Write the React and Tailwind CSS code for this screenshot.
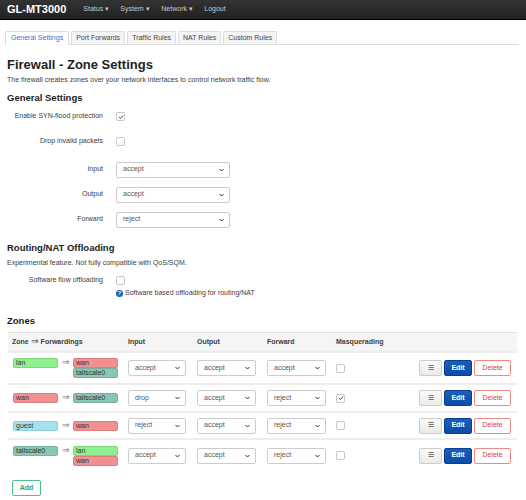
import React from "react";

const F = "font-['Liberation_Sans',Arial,sans-serif]";

function Check({ checked }) {
  return (
    <div className="w-[9px] h-[9px] border border-[#c8c8c8] rounded-[2px] bg-white flex items-center justify-center">
      {checked && (
        <svg width="6" height="6" viewBox="0 0 10 10">
          <path d="M1.5 5.2 L4 7.6 L8.6 2.4" fill="none" stroke="#333" strokeWidth="1.5" />
        </svg>
      )}
    </div>
  );
}

function Select({ value, w }) {
  return (
    <div className={`${w} h-[16px] border border-[#ccc] rounded-[2px] bg-white flex items-center justify-between pl-[6px] pr-[5px] text-[7px] text-[#555]`}>
      <span>{value}</span>
      <svg width="5" height="4" viewBox="0 0 10 8">
        <path d="M1 2 L5 6 L9 2" fill="none" stroke="#333" strokeWidth="2" />
      </svg>
    </div>
  );
}

const zoneColors = {
  lan: "bg-[#90f090] border-[#7fd67f]",
  wan: "bg-[#f09090] border-[#dc7f7f]",
  guest: "bg-[#a4e2ef] border-[#90cfdc]",
  tailscale0: "bg-[#8ac6b4] border-[#78b3a1]",
};

function Badge({ z }) {
  return (
    <div className={`w-[45px] h-[10px] border rounded-[2px] ${zoneColors[z]} text-[7px] leading-[8px] text-[#333] pl-[2px]`}>
      {z}
    </div>
  );
}

function FormRow({ label, h, children, extra = "" }) {
  return (
    <div className={`flex items-center ${h} ${extra}`}>
      <div className="w-[103px] text-right text-[7px] text-[#404040]">{label}</div>
      <div className="ml-[13px]">{children}</div>
    </div>
  );
}

function ZoneRow({ zone, fwd, input, output, forward, masq, h }) {
  return (
    <div className={`flex items-center ${h} border-t-2 border-[#eee]`}>
      <div className="w-[117px] pl-[5px] flex items-start">
        <Badge z={zone} />
        <span className="text-[9px] text-[#777] ml-[4px] mr-[3px] leading-[9px]">⇒</span>
        <div className="flex flex-col">
          {fwd.map((f) => (
            <Badge key={f} z={f} />
          ))}
        </div>
      </div>
      <div className="w-[72px] pl-[3px]">
        <Select value={input} w="w-[58px]" />
      </div>
      <div className="w-[70px]">
        <Select value={output} w="w-[59px]" />
      </div>
      <div className="w-[69px]">
        <Select value={forward} w="w-[59px]" />
      </div>
      <div className="w-[40px]">
        <Check checked={masq} />
      </div>
      <div className="flex-1 flex justify-end pr-[6px] gap-[2px]">
        <div className="w-[23px] h-[16px] border border-[#ccc] rounded-[2px] bg-gradient-to-b from-[#fafafa] to-[#eaeaea] flex items-center justify-center text-[7px] text-[#555]">☰</div>
        <div className="w-[28px] h-[16px] border border-[#0a3f8a] rounded-[2px] bg-gradient-to-b from-[#1a5fc0] to-[#0a4ca6] flex items-center justify-center text-[7px] font-bold text-white">Edit</div>
        <div className="w-[37px] h-[16px] border border-[#f08a80] rounded-[2px] bg-white flex items-center justify-center text-[7px] text-[#e0403a]">Delete</div>
      </div>
    </div>
  );
}

export default function App() {
  return (
    <div className={`${F} w-[526px] h-[500px] overflow-hidden bg-white text-[#333]`}>
      {/* navbar */}
      <div className="h-[20px] bg-gradient-to-b from-[#333] to-[#222] border-b border-black flex items-center">
        <span className="ml-[7px] text-[11px] font-bold text-white">GL-MT3000</span>
        <div className="ml-[17px] flex items-center text-[7px] text-[#c8c8c8]">
          <span className="w-[37px]">Status ▾</span>
          <span className="w-[41px]">System ▾</span>
          <span className="w-[43px]">Network ▾</span>
          <span>Logout</span>
        </div>
      </div>

      {/* tabs */}
      <div className="mt-[11px] ml-[5px] mr-[7px] flex items-end h-[14px] border-b border-[#ddd] text-[7px]">
        <div className="h-[14px] px-[5px] flex items-center border border-b-0 border-[#ddd] rounded-t-[2px] bg-white text-[#2a7ad2] -mb-px">General Settings</div>
        <div className="ml-[2px] h-[13px] px-[4px] flex items-center border border-b-0 border-[#ddd] rounded-t-[2px] bg-[#f4f4f4] text-[#444]">Port Forwards</div>
        <div className="ml-[2px] h-[13px] px-[4px] flex items-center border border-b-0 border-[#ddd] rounded-t-[2px] bg-[#f4f4f4] text-[#444]">Traffic Rules</div>
        <div className="ml-[2px] h-[13px] px-[4px] flex items-center border border-b-0 border-[#ddd] rounded-t-[2px] bg-[#f4f4f4] text-[#444]">NAT Rules</div>
        <div className="ml-[2px] h-[13px] px-[4px] flex items-center border border-b-0 border-[#ddd] rounded-t-[2px] bg-[#f4f4f4] text-[#444]">Custom Rules</div>
      </div>

      <div className="px-[7px]">
        <h1 className="mt-[12px] text-[13px] leading-[15px] font-bold text-[#222]">Firewall - Zone Settings</h1>
        <p className="mt-[3px] text-[7px] leading-[10px] text-[#404040]">
          The firewall creates zones over your network interfaces to control network traffic flow.
        </p>
        <h2 className="mt-[7px] text-[9.5px] leading-[12px] font-bold text-[#222]">General Settings</h2>
      </div>

      <FormRow label="Enable SYN-flood protection" h="h-[25px]"><Check checked /></FormRow>
      <FormRow label="Drop invalid packets" h="h-[25px]"><Check /></FormRow>
      <FormRow label="Input" h="h-[25px]" extra="mt-[3px]"><Select value="accept" w="w-[114px]" /></FormRow>
      <FormRow label="Output" h="h-[25px]"><Select value="accept" w="w-[114px]" /></FormRow>
      <FormRow label="Forward" h="h-[25px]"><Select value="reject" w="w-[114px]" /></FormRow>

      <div className="px-[7px]">
        <h2 className="mt-[10px] text-[9.5px] leading-[12px] font-bold text-[#222]">Routing/NAT Offloading</h2>
        <p className="mt-[4px] text-[7px] leading-[10px] text-[#404040]">
          Experimental feature. Not fully compatible with QoS/SQM.
        </p>
      </div>
      <FormRow label="Software flow offloading" h="h-[16px]" extra="mt-[4px]"><Check /></FormRow>
      <div className="ml-[116px] flex items-center h-[10px] text-[7px] text-[#404040]">
        <div className="w-[7px] h-[7px] rounded-full bg-[#1a64c8] text-white text-[5.5px] font-bold flex items-center justify-center mr-[2px]">?</div>
        Software based offloading for routing/NAT
      </div>

      <div className="px-[7px]">
        <h2 className="mt-[17px] text-[9.5px] leading-[12px] font-bold text-[#222]">Zones</h2>
      </div>

      <div className="mt-[5px] ml-[8px] w-[509px]">
        <div className="flex items-center h-[19px] bg-[#f5f5f5] border-t border-[#e0e0e0] text-[7px] font-bold text-[#404040]">
          <div className="w-[117px] pl-[4px]">Zone <span className="text-[9px] font-normal">⇒</span> Forwardings</div>
          <div className="w-[72px] pl-[3px]">Input</div>
          <div className="w-[70px]">Output</div>
          <div className="w-[69px]">Forward</div>
          <div>Masquerading</div>
        </div>
        <ZoneRow zone="lan" fwd={["wan", "tailscale0"]} input="accept" output="accept" forward="accept" h="h-[32px]" />
        <ZoneRow zone="wan" fwd={["tailscale0"]} input="drop" output="accept" forward="reject" masq h="h-[28px]" />
        <ZoneRow zone="guest" fwd={["wan"]} input="reject" output="accept" forward="reject" h="h-[27px]" />
        <ZoneRow zone="tailscale0" fwd={["lan", "wan"]} input="accept" output="accept" forward="reject" h="h-[33px]" />
      </div>

      <div className="mt-[9px] ml-[12px] w-[29px] h-[16px] border border-[#4cc38a] rounded-[2px] bg-white flex items-center justify-center text-[7px] font-bold text-[#2ba56a]">
        Add
      </div>
    </div>
  );
}
